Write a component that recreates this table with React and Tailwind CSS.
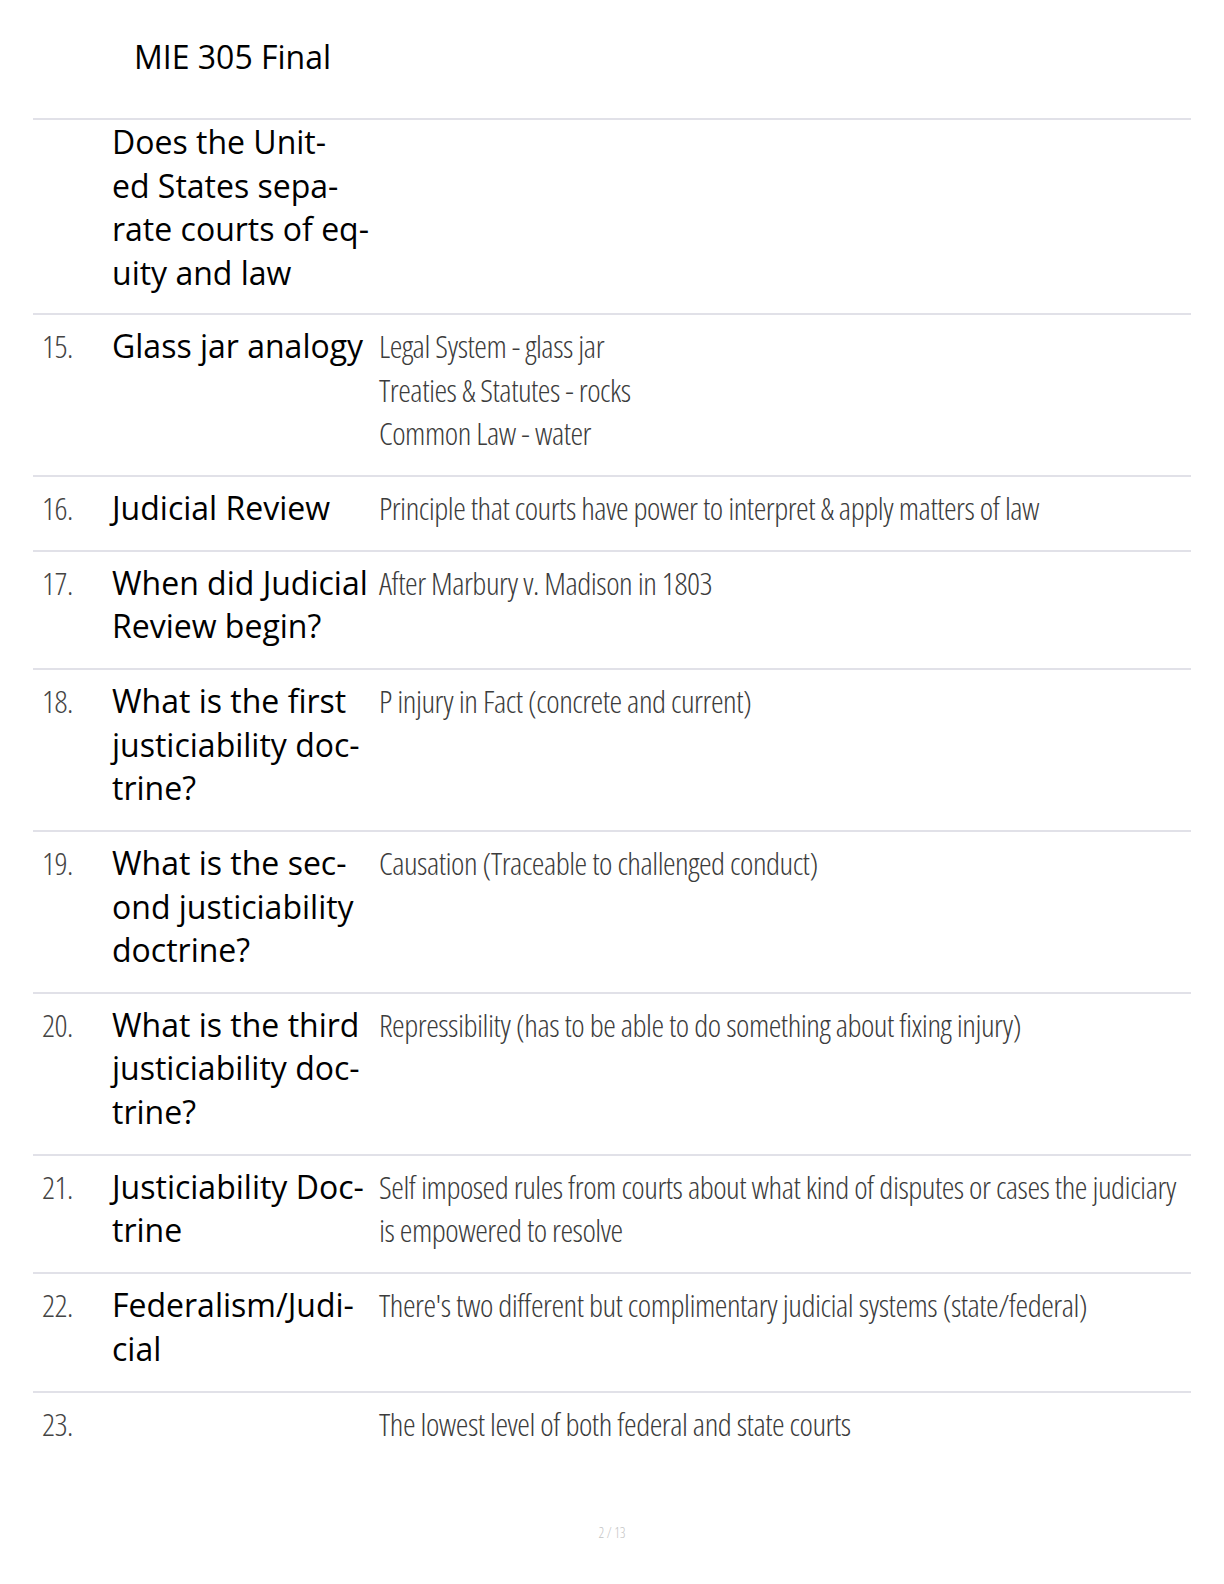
import React from 'react';

const cards = [
  { num: '', q: ['Does the Unit-', 'ed States sepa-', 'rate courts of eq-', 'uity and law'], a: [], first: true },
  { num: '15.', q: ['Glass jar analogy'], a: ['Legal System - glass jar', 'Treaties & Statutes - rocks', 'Common Law - water'] },
  { num: '16.', q: ['Judicial Review'], a: ['Principle that courts have power to interpret & apply matters of law'] },
  { num: '17.', q: ['When did Judicial', 'Review begin?'], a: ['After Marbury v. Madison in 1803'] },
  { num: '18.', q: ['What is the first', 'justiciability doc-', 'trine?'], a: ['P injury in Fact (concrete and current)'] },
  { num: '19.', q: ['What is the sec-', 'ond justiciability', 'doctrine?'], a: ['Causation (Traceable to challenged conduct)'] },
  { num: '20.', q: ['What is the third', 'justiciability doc-', 'trine?'], a: ['Repressibility (has to be able to do something about fixing injury)'] },
  { num: '21.', q: ['Justiciability Doc-', 'trine'], a: ['Self imposed rules from courts about what kind of disputes or cases the judiciary', 'is empowered to resolve'] },
  { num: '22.', q: ['Federalism/Judi-', 'cial'], a: ["There's two different but complimentary judicial systems (state/federal)"] },
  { num: '23.', q: [], a: ['The lowest level of both federal and state courts'], last: true },
];

function Card({ card }) {
  return (
    <div
      className={
        'grid grid-cols-[79px_267px_1fr] border-t-2 border-[#e1e1e8] leading-[43.5px] ' +
        (card.first ? 'pt-0 pb-[19px]' : 'pt-[9px] pb-[20.4px]')
      }
    >
      <div className="pl-[9px] font-['Open_Sans'] font-light font-stretch-[62.5%] tracking-[-0.5px] text-[32px] text-[#444]">
        {card.num}
      </div>
      <div className="font-['Open_Sans'] text-[32px] text-black">
        {card.q.map((line, i) => (
          <div key={i} className="whitespace-nowrap">{line}</div>
        ))}
      </div>
      <div className="font-['Open_Sans'] font-light font-stretch-[62.5%] tracking-[-0.5px] text-[32px] text-[#3c3c3c]">
        {card.a.map((line, i) => (
          <div key={i} className="whitespace-nowrap">{line}</div>
        ))}
      </div>
    </div>
  );
}

export default function App() {
  return (
    <div className="w-[1224px] h-[1584px] bg-white flex flex-col">
      <div className="h-[118px] pt-[33px] pl-[134px] font-['Open_Sans'] text-[32px] text-black">
        MIE 305 Final
      </div>
      <div className="mx-[33px]">
        {cards.map((card, i) => (
          <Card key={i} card={card} />
        ))}
      </div>
      <div className="mt-[56px] text-center font-['Open_Sans'] font-light font-stretch-[62.5%] text-[14px] text-[#c4c4c4]">
        2 / 13
      </div>
    </div>
  );
}
